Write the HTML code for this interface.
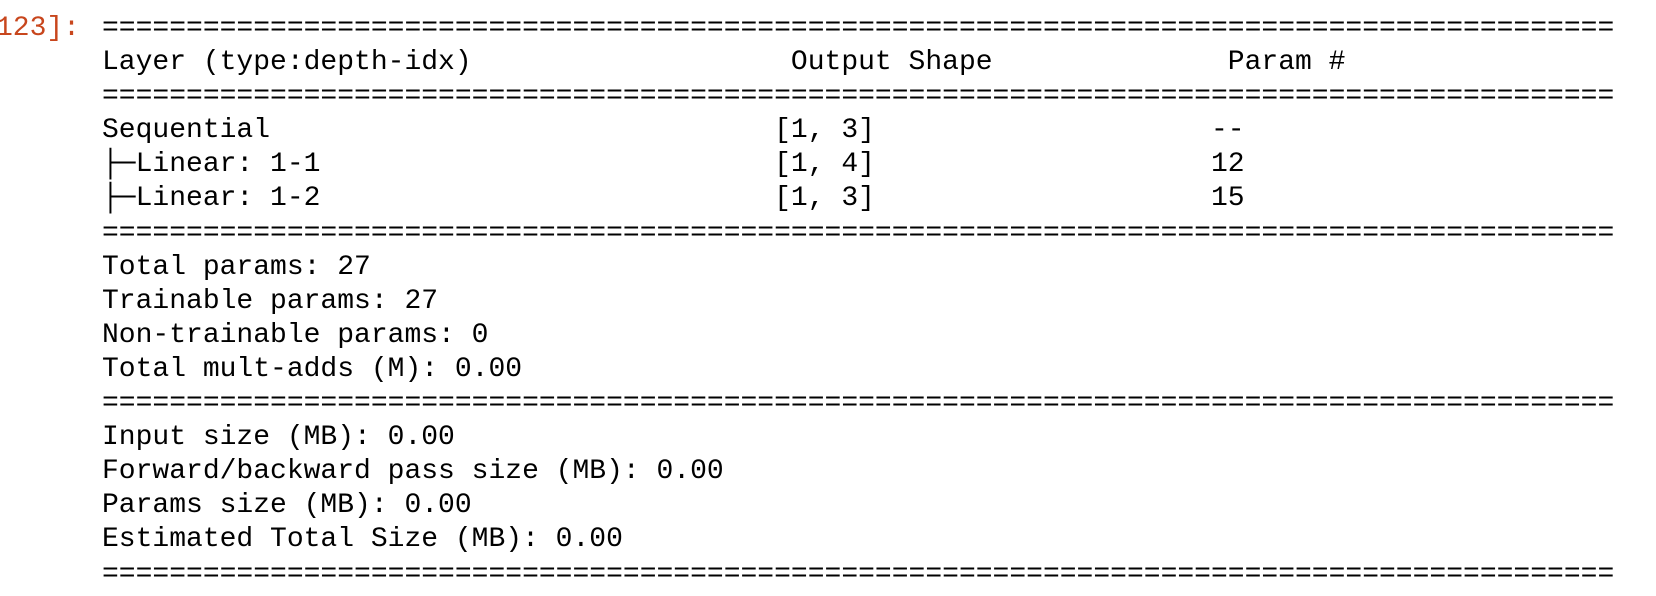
<!DOCTYPE html>
<html><head><meta charset="utf-8"><style>
html,body{margin:0;padding:0;background:#fff;width:1656px;height:596px;overflow:hidden}
pre{position:absolute;left:102px;top:12px;margin:0;font-family:"Liberation Mono","DejaVu Sans Mono",monospace;font-size:28px;line-height:34.1px;color:#000;white-space:pre}
.p{position:absolute;right:1576px;top:12px;margin:0;font-family:"Liberation Mono",monospace;font-size:28px;line-height:34.1px;color:#c8461d;white-space:pre}
</style></head><body>
<div class="p">[123]:</div>
<pre>==========================================================================================
Layer (type:depth-idx)                   Output Shape              Param #
==========================================================================================
Sequential                              [1, 3]                    --
├─Linear: 1-1                           [1, 4]                    12
├─Linear: 1-2                           [1, 3]                    15
==========================================================================================
Total params: 27
Trainable params: 27
Non-trainable params: 0
Total mult-adds (M): 0.00
==========================================================================================
Input size (MB): 0.00
Forward/backward pass size (MB): 0.00
Params size (MB): 0.00
Estimated Total Size (MB): 0.00
==========================================================================================</pre>
</body></html>
